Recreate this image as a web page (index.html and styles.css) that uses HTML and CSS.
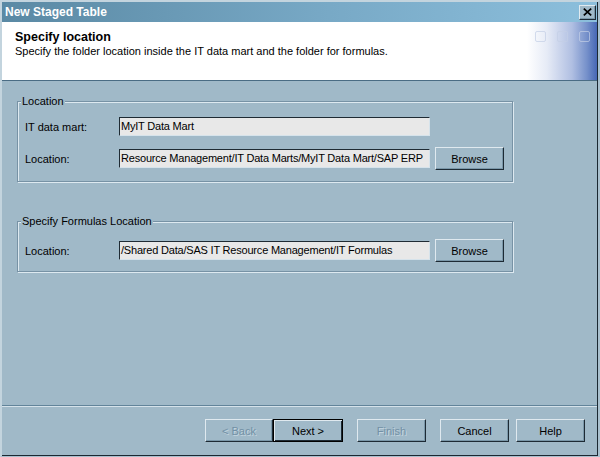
FILE: index.html
```html
<!DOCTYPE html>
<html>
<head>
<meta charset="utf-8">
<link rel="stylesheet" href="styles.css">
</head>
<body>
<div class="window">
  <div class="frame">
    <div class="titlebar">
      <span class="title">New Staged Table</span>
      <span class="close"><svg width="9" height="8" viewBox="0 0 9 8"><path d="M0.8 0.6 L8.2 7.4 M8.2 0.6 L0.8 7.4" stroke="#000" stroke-width="1.7" fill="none"/></svg></span>
    </div>
    <div class="header">
      <div class="htext">
        <div class="htitle">Specify location</div>
        <div class="hsub">Specify the folder location inside the IT data mart and the folder for formulas.</div>
      </div>
      <div class="squares"><span class="sq"></span><span class="sq"></span><span class="sq"></span></div>
    </div>
    <div class="content">
      <fieldset class="group g1">
        <legend>Location</legend>
        <div class="rows">
          <div class="row">
            <span class="label">IT data mart:</span>
            <div class="field">MyIT Data Mart</div>
          </div>
          <div class="row">
            <span class="label">Location:</span>
            <div class="field">Resource Management/IT Data Marts/MyIT Data Mart/SAP ERP</div>
            <div class="btn browse">Browse</div>
          </div>
        </div>
      </fieldset>
      <fieldset class="group g2">
        <legend>Specify Formulas Location</legend>
        <div class="rows">
          <div class="row">
            <span class="label">Location:</span>
            <div class="field">/Shared Data/SAS IT Resource Management/IT Formulas</div>
            <div class="btn browse">Browse</div>
          </div>
        </div>
      </fieldset>
    </div>
    <div class="sep"></div>
    <div class="footer">
      <div class="btn back disabled">&lt; Back</div>
      <div class="btn next default">Next &gt;</div>
      <div class="btn finish disabled">Finish</div>
      <div class="btn cancel">Cancel</div>
      <div class="btn help">Help</div>
    </div>
  </div>
</div>
</body>
</html>
```
FILE: styles.css
```css
* { box-sizing: border-box; }
html, body { margin: 0; padding: 0; }
body {
  width: 600px;
  height: 457px;
  overflow: hidden;
  font-family: "Liberation Sans", Arial, sans-serif;
  font-size: 11px;
  color: #000;
  background: #a0b9c8;
}
.window {
  width: 600px;
  height: 457px;
  background: #a0b9c8;
  border-style: solid;
  border-width: 2px 2px 1px 2px;
  border-color: #c3d4de #a9c0ce #a9c0ce #c3d4de;
  display: flex;
}
.frame {
  flex: 1;
  display: flex;
  flex-direction: column;
  border-right: 1px solid #1b2832;
  border-bottom: 1px solid #1b2832;
}
.titlebar {
  height: 20px;
  flex: none;
  display: flex;
  align-items: center;
  justify-content: space-between;
  padding: 0 1px 0 3px;
  background: linear-gradient(to right, #5a89a4 0%, #78a9c6 55%, #8cbfdc 100%);
}
.title {
  color: #fff;
  font-weight: bold;
  font-size: 12px;
  line-height: 14px;
}
.close {
  width: 17px;
  height: 15px;
  display: flex;
  align-items: center;
  justify-content: center;
  background: #a0b9c8;
  border: 1px solid;
  border-color: #e0eaf0 #1b2832 #1b2832 #e0eaf0;
  box-shadow: inset -1px -1px 0 #7a97a9;
}
.header {
  height: 59px;
  flex: none;
  display: flex;
  justify-content: space-between;
  padding: 8px 7px 0 13px;
  border-bottom: 1px solid #4a6c84;
  background: linear-gradient(to right, #fff 0, #fff 525px, #e6ebf6 545px, #b0bfe2 570px, #7590ca 585px, #4767b5 595px);
}
.htitle {
  font-weight: bold;
  font-size: 12.5px;
  line-height: 14px;
}
.hsub {
  margin-top: 1px;
  line-height: 13px;
}
.squares {
  display: flex;
  gap: 11px;
  margin-top: 1px;
}
.sq {
  width: 11px;
  height: 11px;
  border: 1px solid rgba(195, 206, 230, 0.7);
  border-radius: 2px;
}
.content {
  flex: 1;
  padding-left: 15px;
}
.group {
  width: 496px;
  min-width: 0;
  margin: 14px 0 0 0;
  padding: 0 7px 11px 7px;
  border: 1px solid #7792a5;
  box-shadow: inset 1px 1px 0 #dde9f0, 1px 1px 0 #dde9f0;
}
.group legend {
  padding: 0 1px;
  margin-left: -4px;
  line-height: 13px;
  background: #a0b9c8;
}
.g2 { margin-top: 33px; padding-bottom: 9px; }
.rows {
  display: flex;
  flex-direction: column;
  gap: 9px;
  margin-top: 7px;
}
.g2 .rows { margin-top: 11px; }
.row {
  height: 23px;
  display: flex;
  align-items: center;
}
.label {
  width: 94px;
  flex: none;
}
.field {
  width: 311px;
  height: 19px;
  flex: none;
  background: #e8e8e8;
  border: 1px solid;
  border-color: #1f2b34 #d6e3eb #d6e3eb #1f2b34;
  padding: 0 1px;
  line-height: 17px;
  letter-spacing: -0.2px;
  white-space: nowrap;
  overflow: hidden;
}
.btn {
  height: 23px;
  display: flex;
  align-items: center;
  justify-content: center;
  background: #a0b9c8;
  border: 1px solid;
  border-color: #dfe9ef #1d2a34 #1d2a34 #dfe9ef;
  box-shadow: inset -1px -1px 0 #7a97a9;
  flex: none;
}
.browse {
  width: 69px;
  margin-left: 5px;
}
.disabled {
  color: #7290a5;
  text-shadow: 1px 1px 0 #c4d5df;
}
.default {
  border: 1px solid #000;
  box-shadow: inset 1px 1px 0 #dfe9ef, inset -1px -1px 0 #1d2a34;
}
.sep {
  height: 2px;
  flex: none;
  border-top: 1px solid #62849a;
  border-bottom: 1px solid #d5e2ea;
}
.footer {
  height: 48px;
  flex: none;
  display: flex;
  justify-content: flex-end;
  align-items: flex-start;
  padding: 12px 12px 0 0;
}
.back { width: 68px; }
.next { width: 70px; margin-right: 14px; }
.finish { width: 69px; margin-right: 14px; }
.cancel { width: 69px; margin-right: 7px; }
.help { width: 69px; }
```
